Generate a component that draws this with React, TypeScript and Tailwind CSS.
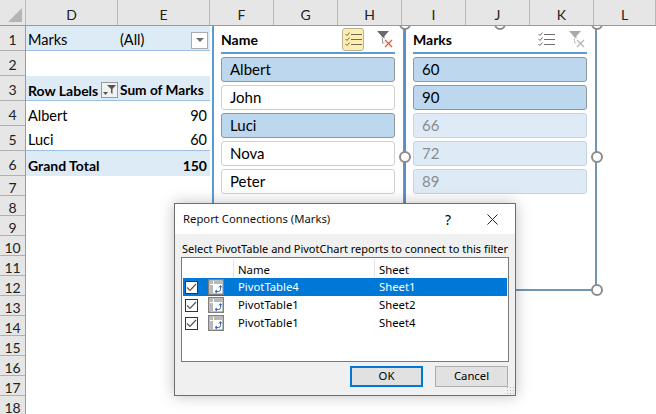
import React from 'react';

const columns = [
  { label: 'D', width: 'w-[92px]' },
  { label: 'E', width: 'w-[92px]' },
  { label: 'F', width: 'w-[64px]' },
  { label: 'G', width: 'w-[64px]' },
  { label: 'H', width: 'w-[64px]' },
  { label: 'I', width: 'w-[64px]' },
  { label: 'J', width: 'w-[64px]' },
  { label: 'K', width: 'w-[64px]' },
  { label: 'L', width: 'w-[62px]' },
];

const rows = [
  { n: 1, h: 'h-[25px]' },
  { n: 2, h: 'h-[25px]' },
  { n: 3, h: 'h-[25px]' },
  { n: 4, h: 'h-[25px]' },
  { n: 5, h: 'h-[25px]' },
  { n: 6, h: 'h-[25px]' },
  { n: 7, h: 'h-[20px]' },
  { n: 8, h: 'h-[20px]' },
  { n: 9, h: 'h-[20px]' },
  { n: 10, h: 'h-[20px]' },
  { n: 11, h: 'h-[20px]' },
  { n: 12, h: 'h-[20px]' },
  { n: 13, h: 'h-[20px]' },
  { n: 14, h: 'h-[20px]' },
  { n: 15, h: 'h-[20px]' },
  { n: 16, h: 'h-[20px]' },
  { n: 17, h: 'h-[20px]' },
  { n: 18, h: 'h-[20px]' },
];

const nameItems = [
  { label: 'Albert', state: 'on' },
  { label: 'John', state: 'off' },
  { label: 'Luci', state: 'on' },
  { label: 'Nova', state: 'off' },
  { label: 'Peter', state: 'off' },
];

const marksItems = [
  { label: '60', state: 'on' },
  { label: '90', state: 'on' },
  { label: '66', state: 'none' },
  { label: '72', state: 'none' },
  { label: '89', state: 'none' },
];

const connections = [
  { name: 'PivotTable4', sheet: 'Sheet1', selected: true },
  { name: 'PivotTable1', sheet: 'Sheet2', selected: false },
  { name: 'PivotTable1', sheet: 'Sheet4', selected: false },
];

function MultiSelectIcon({ muted }: { muted?: boolean }) {
  const c = muted ? '#6e6e6e' : '#6f6a55';
  return (
    <svg width="17" height="15" viewBox="0 0 17 15" fill="none" stroke={c} strokeWidth="1">
      <path d="M0.500 2L2 3.500L4.500 0.500" />
      <path d="M0.500 7L2 8.500L4.500 5.500" />
      <path d="M0.500 12L2 13.500L4.500 10.500" />
      <path d="M6 2.500h11M6 7.500h11M6 12.500h11" strokeWidth="1.200" />
    </svg>
  );
}

function ClearFilterIcon({ muted }: { muted?: boolean }) {
  return (
    <svg width="17" height="17" viewBox="0 0 17 17" fill="none">
      <path d="M0 0h12L7.500 5V7.500L4.500 5.500V5z" fill={muted ? '#a9a9a9' : '#6a6a6a'} />
      <path d="M5.500 7v5h2" stroke={muted ? '#c4c4c4' : '#9a9a9a'} strokeWidth="1" />
      <path d="M8 9l7 7M15 9l-7 7" stroke={muted ? '#b5b5b5' : '#e2603f'} strokeWidth="1.300" />
    </svg>
  );
}

function PivotIcon() {
  return (
    <svg width="16" height="16" viewBox="0 0 16 16" fill="none" className="shrink-0">
      <rect x="0.750" y="0.750" width="14.500" height="14.500" fill="#fff" stroke="#808080" strokeWidth="1.500" />
      <path d="M2 2h3v3H2zM6 2h8v3H6zM2 6h3v8H2z" fill="#b8b8b8" />
      <path d="M7.500 12.500h3a2 2 0 0 0 2-2V7" stroke="#2b6cb5" strokeWidth="1" />
      <path d="M11 8.500l1.500-2 1.500 2M9 11l-2 1.500 2 1.500" stroke="#2b6cb5" strokeWidth="1" />
    </svg>
  );
}

function CheckBox() {
  return (
    <span className="flex h-[13px] w-[13px] shrink-0 items-center justify-center border border-[#333] bg-white">
      <svg width="11" height="9" viewBox="0 0 11 9" fill="none">
        <path d="M1 4.500L4 7.500L10 1" stroke="#555" strokeWidth="1.200" />
      </svg>
    </span>
  );
}

function Handle({ className }: { className: string }) {
  return <span className={`absolute h-[12px] w-[12px] rounded-full border-2 border-[#8c8c8c] bg-white ${className}`} />;
}

function SlicerItem({ label, state }: { label: string; state: string }) {
  const look =
    state === 'on'
      ? 'bg-[#bdd7ee] border-[#8f979f] text-black'
      : state === 'off'
        ? 'bg-white border-[#cfcfcf] text-black'
        : 'bg-[#deebf6] border-[#c9d3dd] text-[#8b8b8b]';
  return (
    <div className={`flex h-[25px] items-center rounded-[3px] border pl-2 text-[15px] leading-none ${look}`}>
      {label}
    </div>
  );
}

export default function App() {
  return (
    <div className="relative h-[414px] w-[656px] overflow-hidden bg-white font-[Lato,sans-serif] text-[14.500px] text-black">
      {/* Column headers */}
      <div className="relative z-10 flex h-[26px] border-b border-[#9b9b9b] bg-[#e6e6e6]">
        <div className="flex w-[26px] items-end justify-end border-r border-[#bcbcbc] p-[3px]">
          <span className="h-0 w-0 border-b-[14px] border-l-[14px] border-b-[#b5b5b5] border-l-transparent" />
        </div>
        {columns.map((col) => (
          <div
            key={col.label}
            className={`flex items-center justify-center border-r border-[#b8b8b8] pt-[4px] text-[14px] text-[#222] ${col.width}`}
          >
            {col.label}
          </div>
        ))}
      </div>

      <div className="flex">
        {/* Row headers */}
        <div className="w-[26px] shrink-0 border-r border-[#9b9b9b] bg-[#e6e6e6]">
          {rows.map((row) => (
            <div
              key={row.n}
              className={`flex items-center justify-center border-b border-[#b0b0b0] pt-[3px] text-[14px] text-[#222] ${row.h}`}
            >
              {row.n}
            </div>
          ))}
        </div>

        {/* Pivot table */}
        <div className="w-[184px] shrink-0">
          <div className="flex h-[25px] items-center border-b border-[#9bc2e6] bg-[#ddebf7] pt-[4px]">
            <span className="w-[92px] pl-[2px]">Marks</span>
            <span className="flex flex-1 items-center justify-between pl-[2px] pr-[2px]">
              (All)
              <span className="flex h-[17px] w-[17px] items-center justify-center border border-[#ababab] bg-white">
                <span className="h-0 w-0 border-x-[4px] border-t-[4px] border-x-transparent border-t-[#6d6d6d]" />
              </span>
            </span>
          </div>
          <div className="h-[25px]" />
          <div className="flex h-[25px] items-center border-b border-[#9bc2e6] bg-[#ddebf7] pt-[4px] text-[14px] font-bold">
            <span className="flex w-[92px] items-center justify-between pl-[2px]">
              <span className="whitespace-nowrap">Row Labels</span>
              <span className="flex h-[16px] w-[17px] items-center justify-center border border-[#9a9a9a] bg-[#f1f1f1]">
                <svg width="13" height="10" viewBox="0 0 13 10">
                  <path d="M4 0h9L9.500 4v5L8 8V4z" fill="#555" />
                  <path d="M0 7h5L2.500 10z" fill="#555" />
                </svg>
              </span>
            </span>
            <span className="pl-[2px] text-[13.700px] whitespace-nowrap">Sum of Marks</span>
          </div>
          <div className="flex h-[25px] items-center justify-between px-[2px] pr-[3px] pt-[4px]">
            <span>Albert</span>
            <span>90</span>
          </div>
          <div className="flex h-[25px] items-center justify-between border-b border-[#9bc2e6] px-[2px] pr-[3px] pt-[4px]">
            <span>Luci</span>
            <span>60</span>
          </div>
          <div className="flex h-[25px] items-center justify-between bg-[#ddebf7] px-[2px] pr-[3px] pt-[4px] text-[14px] font-bold">
            <span>Grand Total</span>
            <span>150</span>
          </div>
        </div>
      </div>

      {/* Name slicer, floats over the sheet */}
      <div className="absolute left-[212px] top-[26px] h-[264px] w-[193px] border-x-2 border-[#5b9bd5] bg-white pl-[7px] pr-[8px]">
        <div className="flex h-[26px] items-center justify-between pr-[1px]">
          <span className="text-[14px] font-bold">Name</span>
          <span className="flex items-center gap-[13px]">
            <span className="flex h-[23px] w-[22px] items-center justify-center rounded-[3px] border border-[#b9b39a] bg-[#fdeeb0]">
              <MultiSelectIcon />
            </span>
            <ClearFilterIcon />
          </span>
        </div>
        <div className="flex flex-col gap-[3px] border-t-2 border-[#5b9bd5] pt-[3px]">
          {nameItems.map((item) => (
            <SlicerItem key={item.label} label={item.label} state={item.state} />
          ))}
        </div>
      </div>

      {/* Marks slicer */}
      <div className="absolute left-[404px] top-[26px] h-[265px] w-[193px] border-x-2 border-b-2 border-b-[#7294b5] border-l-[#5b8fc4] border-r-[#7294b5] bg-white pl-[7px] pr-[8px]">
        <div className="flex h-[26px] items-center justify-between pr-[1px]">
          <span className="text-[14px] font-bold">Marks</span>
          <span className="flex items-center gap-[14px]">
            <MultiSelectIcon muted />
            <ClearFilterIcon muted />
          </span>
        </div>
        <div className="flex flex-col gap-[3px] border-t-2 border-[#5b9bd5] pt-[3px]">
          {marksItems.map((item) => (
            <SlicerItem key={item.label} label={item.label} state={item.state} />
          ))}
        </div>
      </div>
      <Handle className="left-[399px] top-[18px]" />
      <Handle className="left-[494px] top-[18px]" />
      <Handle className="left-[591px] top-[18px]" />
      <Handle className="left-[399px] top-[151px]" />
      <Handle className="left-[591px] top-[151px]" />
      <Handle className="left-[591px] top-[284px]" />

      {/* Report Connections dialog */}
      <div className="absolute left-[174px] top-[203px] z-20 flex h-[193px] w-[342px] flex-col border border-[#6d6d6d] bg-[#f0f0f0] font-['Noto_Sans',sans-serif] text-[11.300px] shadow-[0_0_14px_rgba(0,0,0,0.25)]">
        <div className="flex h-[30px] items-center justify-between bg-white pl-[8px] pr-[17px]">
          <span className="text-[#111]">Report Connections (Marks)</span>
          <span className="flex items-center gap-[36px]">
            <span className="text-[14px]">?</span>
            <svg width="11" height="11" viewBox="0 0 11 11" stroke="#222" fill="none">
              <path d="M0.500 0.500l10 10M10.500 0.500l-10 10" />
            </svg>
          </span>
        </div>
        <div className="px-[7px] pt-[6px] text-[11px] leading-[17px] whitespace-nowrap">
          Select PivotTable and PivotChart reports to connect to this filter
        </div>
        <div className="mx-[6px] h-[105px] border border-[#7a7a7a] bg-white p-px">
          <div className="flex h-[19px] items-center">
            <span className="h-full w-[51px] border-r border-[#e5e5e5]" />
            <span className="flex h-full w-[141px] items-center border-r border-[#e5e5e5] pl-[4px] pt-[3px]">Name</span>
            <span className="pl-[4px] pt-[3px]">Sheet</span>
          </div>
          <div>
            {connections.map((c) => (
              <div
                key={c.sheet}
                className={`flex h-[18px] items-center ${c.selected ? 'bg-[#0078d7] text-white' : ''}`}
              >
                <span className="flex w-[51px] items-center gap-[10px] pl-[2px]">
                  <CheckBox />
                  <PivotIcon />
                </span>
                <span className="w-[141px] pl-[4px]">{c.name}</span>
                <span className="pl-[4px]">{c.sheet}</span>
              </div>
            ))}
          </div>
        </div>
        <div className="relative flex flex-1 items-start justify-end gap-[12px] pr-[7px] pt-[4px]">
          <button className="h-[21px] w-[73px] border-2 border-[#0078d7] bg-[#e1e1e1]">OK</button>
          <button className="h-[21px] w-[73px] border border-[#adadad] bg-[#e1e1e1]">Cancel</button>
          <span className="absolute bottom-[1px] right-[1px] h-[8px] w-[8px] bg-[radial-gradient(#b5b5b5_1px,transparent_1px)] bg-[length:3px_3px]" />
        </div>
      </div>
    </div>
  );
}
